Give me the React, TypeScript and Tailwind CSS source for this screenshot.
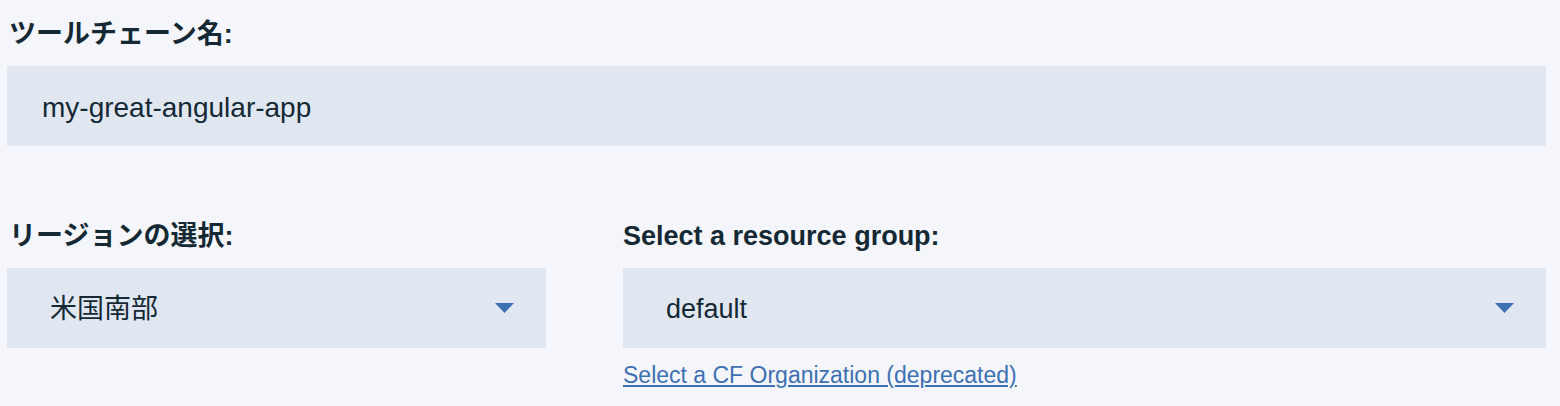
import React from 'react';

const font = "font-['Liberation_Sans','Noto_Sans_CJK_JP',sans-serif]";

const Caret = () => (
  <svg width="19" height="10" viewBox="0 0 19 10" className="shrink-0">
    <path d="M0 0 L19 0 L9.5 10 Z" fill="#3d70b2" />
  </svg>
);

const Select: React.FC<{ value: string }> = ({ value }) => (
  <div className="h-[80px] bg-[#e0e7f1] flex items-center justify-between pl-[43px] pr-[32px] text-[27px] text-[#152935]">
    <span className="pt-[3px]">{value}</span>
    <Caret />
  </div>
);

const Label: React.FC<{ children: React.ReactNode; className?: string }> = ({ children, className = 'pl-[2px]' }) => (
  <div className={`h-[40px] leading-[40px] text-[27px] font-bold text-[#152935] ${className}`}>{children}</div>
);

const App: React.FC = () => {
  return (
    <div className={`${font} min-h-[406px] bg-[#f4f6fb] pl-[7px] pr-[14px] pt-[14px]`}>
      {/* Toolchain name */}
      <Label>ツールチェーン名:</Label>
      <div className="mt-[12px] h-[80px] bg-[#e0e7f1] flex items-center pl-[35px] pt-[3px] text-[28px] text-[#152935]">
        my-great-angular-app
      </div>

      {/* Region + resource group */}
      <div className="mt-[70px] grid grid-cols-[539px_1fr] gap-x-[77px]">
        <div>
          <Label>リージョンの選択:</Label>
          <div className="mt-[12px]">
            <Select value="米国南部" />
          </div>
        </div>
        <div>
          <Label className="pl-0">Select a resource group:</Label>
          <div className="mt-[12px]">
            <Select value="default" />
          </div>
          <a href="#" className="block mt-[12px] w-fit text-[23px] leading-[30px] text-[#3d70b2] underline">
            Select a CF Organization (deprecated)
          </a>
        </div>
      </div>
    </div>
  );
};

export default App;
